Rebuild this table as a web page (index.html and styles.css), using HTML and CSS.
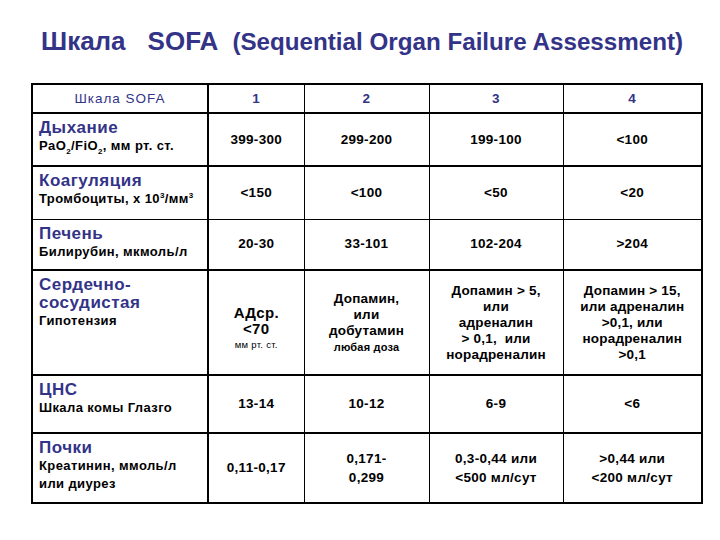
FILE: index.html
```html
<!DOCTYPE html>
<html lang="ru">
<head>
<meta charset="utf-8">
<title>Шкала SOFA</title>
<link rel="stylesheet" href="styles.css">
</head>
<body>
<div class="slide">
  <h1 class="title"><span class="title-main">Шкала</span><span class="title-main title-sofa">SOFA</span><span class="title-sub">(Sequential Organ Failure Assessment)</span></h1>
  <table class="sofa">
    <colgroup>
      <col class="c0"><col class="c1"><col class="c2"><col class="c3"><col class="c4">
    </colgroup>
    <tr class="r-head">
      <th class="h-name">Шкала SOFA</th><th>1</th><th>2</th><th>3</th><th>4</th>
    </tr>
    <tr class="r-1 thick">
      <td class="label"><div class="lt">Дыхание</div><div class="ls">PaO<sub>2</sub>/FiO<sub>2</sub>, мм рт. ст.</div></td>
      <td>399-300</td><td>299-200</td><td>199-100</td><td>&lt;100</td>
    </tr>
    <tr class="r-2 thick">
      <td class="label"><div class="lt">Коагуляция</div><div class="ls">Тромбоциты, х 10<sup>3</sup>/мм<sup>3</sup></div></td>
      <td>&lt;150</td><td>&lt;100</td><td>&lt;50</td><td>&lt;20</td>
    </tr>
    <tr class="r-3">
      <td class="label"><div class="lt">Печень</div><div class="ls">Билирубин, мкмоль/л</div></td>
      <td>20-30</td><td>33-101</td><td>102-204</td><td>&gt;204</td>
    </tr>
    <tr class="r-4 thick">
      <td class="label"><div class="lt">Сердечно-<br>сосудистая</div><div class="ls">Гипотензия</div></td>
      <td class="cv"><div class="big">АДср.<br>&lt;70</div><div class="tiny">мм рт. ст.</div></td>
      <td class="multi"><div>Допамин,<br>или<br>добутамин</div><div class="small">любая доза</div></td>
      <td class="multi m3">Допамин &gt; 5,<br>или<br>адреналин<br>&gt; 0,1,&nbsp; или<br>норадреналин</td>
      <td class="multi m3">Допамин &gt; 15,<br>или адреналин<br>&gt;0,1, или<br>норадреналин<br>&gt;0,1</td>
    </tr>
    <tr class="r-5 thick">
      <td class="label"><div class="lt">ЦНС</div><div class="ls">Шкала комы Глазго</div></td>
      <td>13-14</td><td>10-12</td><td>6-9</td><td>&lt;6</td>
    </tr>
    <tr class="r-6 thick">
      <td class="label"><div class="lt">Почки</div><div class="ls ls2">Креатинин, ммоль/л<br>или диурез</div></td>
      <td>0,11-0,17</td><td class="two">0,171-<br>0,299</td><td class="two">0,3-0,44 или<br>&lt;500 мл/сут</td><td class="two">&gt;0,44 или<br>&lt;200 мл/сут</td>
    </tr>
  </table>
</div>
</body>
</html>
```

FILE: styles.css
```css
html, body {
  margin: 0;
  padding: 0;
  background: #ffffff;
}

.slide {
  width: 720px;
  height: 540px;
  font-family: "Liberation Sans", Arial, sans-serif;
  color: #000;
}

.title {
  margin: 0;
  padding: 24px 0 0 41px;
  height: 83px;
  box-sizing: border-box;
  font-weight: bold;
  color: #333388;
  line-height: 30px;
  white-space: nowrap;
}

.title-main {
  font-size: 26px;
}

.title-sofa {
  margin-left: 22px;
}

.title-sub {
  font-size: 24.2px;
  margin-left: 14px;
}

.sofa {
  margin-left: 31px;
  width: 670px;
  border-collapse: collapse;
  table-layout: fixed;
  border: 2px solid #000;
}

.c0 { width: 176px; }
.c1 { width: 96px; }
.c2 { width: 125px; }
.c3 { width: 134px; }
.c4 { width: 139px; }

.sofa th,
.sofa td {
  border: 1px solid #000;
  padding: 0;
  text-align: center;
  vertical-align: middle;
  font-weight: bold;
  font-size: 13.5px;
  line-height: 16px;
  letter-spacing: 0.3px;
}

.sofa th {
  color: #333388;
  font-size: 13.5px;
}

.sofa th.h-name {
  font-weight: normal;
  letter-spacing: 1px;
}

.sofa td:first-child,
.sofa th:first-child {
  border-right-width: 2px;
}

.thick td {
  border-top-width: 2px;
}

.r-head { height: 29px; }
.r-1 { height: 53px; }
.r-2 { height: 53px; }
.r-3 { height: 51px; }
.r-4 { height: 105px; }
.r-5 { height: 58px; }
.r-6 { height: 70px; }

.sofa td.label {
  text-align: left;
  vertical-align: top;
  padding: 5px 2px 0 6px;
  letter-spacing: 0;
}

.lt {
  color: #333388;
  font-size: 17px;
  line-height: 18px;
  letter-spacing: 0.5px;
}

.ls {
  font-size: 13px;
  line-height: 17px;
  letter-spacing: 0.4px;
  white-space: nowrap;
}

.ls2 {
  line-height: 18px;
}

.ls sub, .ls sup {
  font-size: 8px;
  line-height: 0;
}

.big {
  font-size: 15px;
  line-height: 16px;
  padding-top: 12px;
}

.tiny {
  font-size: 9.5px;
  font-weight: normal;
  line-height: 16px;
}

.sofa td.multi {
  font-size: 13.5px;
  line-height: 16px;
  letter-spacing: 0.2px;
}

.small {
  font-size: 11px;
  line-height: 16px;
}

.sofa td.two {
  line-height: 19px;
}
```
